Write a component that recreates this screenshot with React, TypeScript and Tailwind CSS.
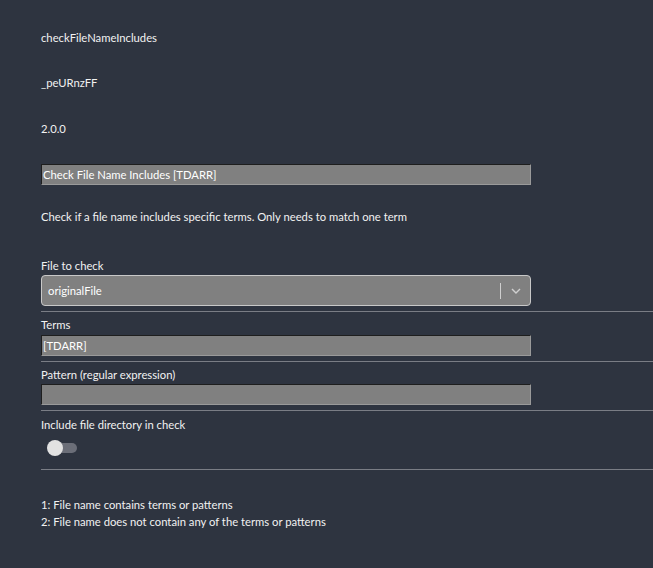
import React from "react";

const font = { fontFamily: "Lato, 'Open Sans', sans-serif" };

function TextInput({ value }: { value: string }) {
  return (
    <div className="w-[490px] h-[21px] bg-[#808080] border border-t-[#1e1e1e] border-l-[#1e1e1e] border-b-[#9a9a9a] border-r-[#9a9a9a] flex items-center px-[1px] text-white text-[11.25px] leading-none">
      {value}
    </div>
  );
}

function Divider() {
  return <div className="h-px bg-[#7a7d85] w-full" />;
}

export default function App() {
  return (
    <div
      className="w-[653px] h-[568px] bg-[#2e3440] text-[#f2f2f2] text-[11.25px] leading-[16px] pl-[41px] overflow-hidden"
      style={font}
    >
      <div className="flex flex-col">
        <div className="mt-[30px] h-[16px]">checkFileNameIncludes</div>
        <div className="mt-[29px] h-[16px]">_peURnzFF</div>
        <div className="mt-[30px] h-[16px]">2.0.0</div>
        <div className="mt-[27px]">
          <TextInput value="Check File Name Includes [TDARR]" />
        </div>
        <div className="mt-[24px] h-[16px]">
          Check if a file name includes specific terms. Only needs to match one term
        </div>
        <div className="mt-[33px] h-[16px]">File to check</div>
        <div className="mt-[1px] w-[490px] h-[31px] bg-[#808080] border border-[#c8c8c8] rounded-[4px] flex items-center pl-[6px] text-white">
          <span className="flex-1">originalFile</span>
          <div className="w-px h-[16px] bg-[#cfcfcf]" />
          <div className="w-[29px] flex items-center justify-center">
            <svg width="10" height="6" viewBox="0 0 10 6" fill="none">
              <path d="M1 1l4 4 4-4" stroke="#d0d0d0" strokeWidth="1.4" />
            </svg>
          </div>
        </div>
        <div className="mt-[5px]">
          <Divider />
        </div>
        <div className="mt-[5px] h-[16px]">Terms</div>
        <div className="mt-[2px]">
          <TextInput value="[TDARR]" />
        </div>
        <div className="mt-[5px]">
          <Divider />
        </div>
        <div className="mt-[5px] h-[16px]">Pattern (regular expression)</div>
        <div className="mt-[1px]">
          <TextInput value="" />
        </div>
        <div className="mt-[5px]">
          <Divider />
        </div>
        <div className="mt-[6px] h-[16px]">Include file directory in check</div>
        <div className="mt-[7px] h-[16px] relative w-[40px]">
          <div className="absolute left-[11px] top-[3px] w-[25px] h-[10px] rounded-full bg-[#6b6e78]" />
          <div className="absolute left-[6px] top-0 w-[16px] h-[16px] rounded-full bg-[#e2e2e2]" />
        </div>
        <div className="mt-[13px]">
          <Divider />
        </div>
        <div className="mt-[26px] leading-[17px]">
          <div>1: File name contains terms or patterns</div>
          <div>2: File name does not contain any of the terms or patterns</div>
        </div>
      </div>
    </div>
  );
}
